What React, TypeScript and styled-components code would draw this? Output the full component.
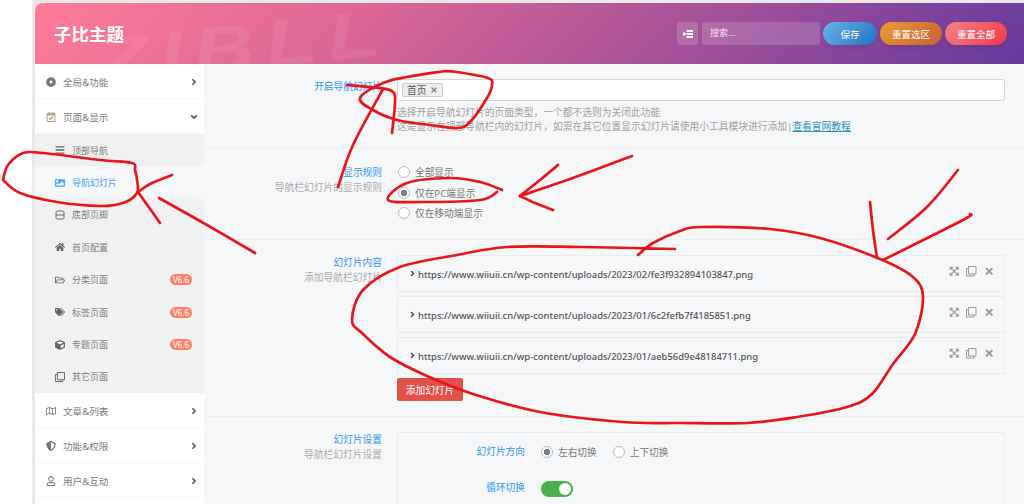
import React from 'react';
import styled, { createGlobalStyle } from 'styled-components';
import {
  FaAngleRight, FaAngleDown, FaDotCircle, FaRegCalendarCheck, FaBars, FaImage, FaHome,
  FaRegFolderOpen, FaTags, FaCube, FaRegClone, FaRegMap, FaShieldAlt, FaRegUser,
  FaExpandArrowsAlt, FaTimes,
} from 'react-icons/fa';

const GlobalStyle = createGlobalStyle`
  html, body {
    margin: 0;
    height: 504px;
    overflow: hidden;
    background: #fff;
    font-family: "Noto Sans", "Noto Sans CJK SC", sans-serif;
  }
`;

const Page = styled.div`
  position: relative;
  height: 504px;
  overflow: hidden;
`;

const Frame = styled.div`
  height: 504px;
  margin-left: 32px;
  padding: 3px 0 0 3px;
  box-sizing: border-box;
  background: #e9e9e9;
`;

const Panel = styled.div`
  height: 100%;
  display: flex;
  flex-direction: column;
  border-top-left-radius: 8px;
  overflow: hidden;
`;

const Header = styled.header`
  position: relative;
  flex: 0 0 61px;
  display: flex;
  align-items: center;
  padding: 0 17px 0 19px;
  background: linear-gradient(135deg, #ff7b97 0%, #d86596 35%, #a04f99 68%, #663a9f 100%);
  overflow: hidden;
`;

const Watermark = styled.div`
  position: absolute;
  left: 65px;
  top: 26px;
  font: italic 700 66px/1 "Liberation Sans", sans-serif;
  letter-spacing: 8px;
  color: rgba(255, 255, 255, 0.07);
  transform: rotate(-6deg) scaleX(1.3);
  transform-origin: left bottom;
`;

const Brand = styled.h1`
  position: relative;
  margin: 0;
  flex: 1;
  font-size: 17.5px;
  font-weight: 700;
  color: #fff;
`;

const HeaderTools = styled.div`
  position: relative;
  display: flex;
  align-items: center;
  gap: 3px;
`;

const ListToggle = styled.div`
  width: 21px;
  height: 23px;
  margin-right: 1px;
  display: flex;
  align-items: center;
  justify-content: center;
  border-radius: 3px;
  background: rgba(255, 255, 255, 0.16);
  color: #fff;
`;

const SearchBox = styled.div`
  width: 118px;
  height: 23px;
  box-sizing: border-box;
  padding-left: 8px;
  border-radius: 3px;
  background: rgba(255, 255, 255, 0.16);
  color: rgba(255, 255, 255, 0.85);
  font-size: 9px;
  line-height: 21px;
`;

const Pill = styled.button<{ $from: string; $to: string; $w: number }>`
  width: ${p => p.$w}px;
  height: 23px;
  padding: 0;
  border: none;
  border-radius: 12px;
  background: linear-gradient(135deg, ${p => p.$from}, ${p => p.$to});
  box-shadow: 0 2px 5px rgba(0, 0, 0, 0.12);
  color: #fff;
  font: inherit;
  font-size: 9.5px;
`;

const Body = styled.div`
  flex: 1;
  display: flex;
  min-height: 0;
`;

const Sidebar = styled.nav`
  flex: 0 0 169px;
  background: #fff;
`;

const NavItem = styled.div`
  height: 35px;
  box-sizing: border-box;
  display: flex;
  align-items: center;
  padding: 1px 5px 0 11px;
  border-bottom: 1px solid #f7f7f7;
  color: #7c7c7c;
  font-size: 9.6px;
`;

const NavIcon = styled.span<{ $tint?: string }>`
  flex: 0 0 17px;
  display: flex;
  align-items: center;
  color: ${p => p.$tint || '#777'};
  font-size: 10px;
`;

const NavText = styled.span`
  flex: 1;
`;

const Caret = styled.span`
  display: flex;
  color: #555;
  font-size: 10px;
`;

const SubList = styled.div`
  background: #f1f1f1;
`;

const SubItem = styled.div<{ $active?: boolean }>`
  height: 32.4px;
  display: flex;
  align-items: center;
  padding: 0 12px 0 20px;
  background: ${p => (p.$active ? '#f6f7f9' : 'transparent')};
  color: ${p => (p.$active ? '#45a5ff' : '#7c7c7c')};
  font-size: 9px;
`;

const SubIcon = styled.span<{ $active?: boolean }>`
  flex: 0 0 17px;
  display: flex;
  align-items: center;
  color: ${p => (p.$active ? '#45a5ff' : '#666')};
  font-size: 10px;
`;

const Badge = styled.span`
  padding: 0 3px;
  height: 11px;
  line-height: 11px;
  border-radius: 6px;
  background: #ff8266;
  color: #fff;
  font-size: 8px;
`;

const Content = styled.main`
  flex: 1;
  background: #f6f7f9;
  min-width: 0;
`;

const Row = styled.section<{ $h: number; $pad: number }>`
  height: ${p => p.$h}px;
  box-sizing: border-box;
  display: grid;
  grid-template-columns: 178px 608px;
  column-gap: 15px;
  padding-top: ${p => p.$pad}px;
  border-bottom: 1px solid #eeeff1;
`;

const LabelCol = styled.div`
  padding-top: 1px;
  text-align: right;
`;

const Label = styled.div`
  color: #2f96f5;
  font-size: 9.7px;
  line-height: 14px;
`;

const SubLabel = styled.div`
  margin-top: 1px;
  color: #aaa;
  font-size: 9.75px;
  line-height: 14px;
`;

const SelectBox = styled.div`
  height: 22px;
  box-sizing: border-box;
  display: flex;
  align-items: center;
  padding-left: 4px;
  border: 1px solid #d5d5d5;
  border-radius: 3px;
  background: #fff;
`;

const Tag = styled.span`
  height: 14px;
  box-sizing: border-box;
  display: flex;
  align-items: center;
  gap: 4px;
  padding: 0 4px;
  border: 1px solid #ccc;
  border-radius: 2px;
  background: #eee;
  color: #555;
  font-size: 9.7px;
`;

const TagClose = styled.span`
  display: flex;
  color: #8c8c8c;
  font-size: 8px;
`;

const Help = styled.p`
  margin: 5px 0 0;
  color: #a0a0a0;
  font-size: 9.75px;
  line-height: 14px;
`;

const HelpLink = styled.a`
  color: #2f8fc4;
  text-decoration: underline;
`;

const RadioGroup = styled.div`
  display: flex;
  flex-direction: column;
  gap: 6.5px;
  padding: 0 0 0 1px;
`;

const RadioRow = styled.div`
  display: flex;
  gap: 16px;
`;

const RadioOption = styled.label`
  height: 14px;
  display: flex;
  align-items: center;
  gap: 5px;
  color: #777;
  font-size: 9.7px;
`;

const RadioMark = styled.span<{ $on?: boolean }>`
  width: 12px;
  height: 12px;
  box-sizing: border-box;
  border: 1px solid #bbb;
  border-radius: 50%;
  background: ${p => (p.$on ? 'radial-gradient(circle, #76838f 0 3px, #fff 3.6px)' : '#fff')};
`;

const Slides = styled.div`
  display: flex;
  flex-direction: column;
  gap: 4px;
`;

const Slide = styled.div`
  height: 37px;
  box-sizing: border-box;
  display: flex;
  align-items: center;
  padding: 0 10px 0 10px;
  border: 1px solid #e9ebee;
`;

const SlideCaret = styled.span`
  flex: 0 0 10px;
  display: flex;
  color: #444;
  font-size: 9px;
`;

const SlideUrl = styled.span`
  flex: 1;
  padding-top: 1px;
  color: #555;
  font-size: 9.43px;
  font-weight: 500;
`;

const SlideActions = styled.span`
  display: flex;
  align-items: center;
  gap: 7px;
  margin-top: -4px;
  color: #999;
  font-size: 10.5px;
`;

const AddButton = styled.button`
  display: block;
  width: 66px;
  height: 23px;
  margin-top: 4px;
  padding: 0;
  border: none;
  border-radius: 2px;
  background: #e2504a;
  color: #fff;
  font: inherit;
  font-size: 9.7px;
`;

const SettingsBox = styled.div`
  height: 90px;
  box-sizing: border-box;
  padding-top: 12px;
  border: 1px solid #e9ebee;
`;

const SettingRow = styled.div`
  height: 36px;
  display: grid;
  grid-template-columns: 127px 1fr;
  column-gap: 16px;
`;

const SettingLabel = styled.div`
  text-align: right;
  color: #2f96f5;
  font-size: 9.7px;
  line-height: 14px;
`;

const Toggle = styled.span`
  position: relative;
  display: block;
  width: 32px;
  height: 16px;
  border-radius: 8px;
  background: #4caf50;

  &::after {
    content: '';
    position: absolute;
    top: 2px;
    right: 2px;
    width: 12px;
    height: 12px;
    border-radius: 50%;
    background: #fff;
  }
`;

const Scribbles = styled.svg`
  position: absolute;
  left: 0;
  top: 0;
  width: 1024px;
  height: 504px;
  pointer-events: none;
`;

const FooterIcon = () => (
  <svg width="10" height="10" viewBox="0 0 10 10" fill="none" stroke="currentColor" strokeWidth="1">
    <rect x="1" y="1" width="8" height="8" rx="1.5" />
    <path d="M1 5h8" />
  </svg>
);

const ListIcon = () => (
  <svg width="10" height="8" viewBox="0 0 10 8" fill="currentColor">
    <rect x="0" y="2.5" width="2.5" height="3" />
    <rect x="3.5" y="0" width="6.5" height="2" />
    <rect x="3.5" y="3" width="6.5" height="2" />
    <rect x="3.5" y="6" width="6.5" height="2" />
  </svg>
);

type Pt = [number, number];

// catmull-rom through the traced points, so the stroke passes through each of them
const smooth = (pts: Pt[]) => {
  let d = `M${pts[0][0]} ${pts[0][1]}`;
  for (let i = 0; i < pts.length - 1; i++) {
    const p0 = pts[i - 1] || pts[i];
    const p1 = pts[i];
    const p2 = pts[i + 1];
    const p3 = pts[i + 2] || p2;
    const c1x = p1[0] + (p2[0] - p0[0]) / 6;
    const c1y = p1[1] + (p2[1] - p0[1]) / 6;
    const c2x = p2[0] - (p3[0] - p1[0]) / 6;
    const c2y = p2[1] - (p3[1] - p1[1]) / 6;
    d += ` C${c1x} ${c1y} ${c2x} ${c2y} ${p2[0]} ${p2[1]}`;
  }
  return d;
};

const strokes: Pt[][] = [
  [[445, 71], [457, 72], [488, 78], [492, 85], [487, 98], [470, 122], [457, 128], [430, 125], [397, 120], [373, 110], [360, 98], [383, 83], [407, 77], [445, 71]],
  [[338, 187], [353, 145], [383, 89]],
  [[347, 85], [380, 88], [393, 92], [395, 103], [392, 133]],
  [[3, 180], [8, 165], [23, 153], [43, 153], [100, 160], [132, 163], [135, 170], [137, 180], [137, 193], [123, 203], [100, 206], [57, 202], [20, 193], [3, 180]],
  [[172, 175], [150, 184], [138, 192]],
  [[138, 192], [148, 206], [160, 223]],
  [[159, 198], [207, 225], [255, 253]],
  [[502, 190], [480, 182], [450, 178], [407, 183], [388, 200], [423, 202], [480, 200], [497, 192]],
  [[632, 156], [573, 178], [520, 196]],
  [[520, 196], [535, 203], [553, 210]],
  [[558, 165], [540, 180], [520, 196]],
  [[675, 249], [580, 247], [507, 247], [457, 255], [400, 267], [363, 290], [352, 320], [363, 334], [390, 357], [427, 376], [473, 394], [540, 412], [623, 422], [680, 423], [747, 423], [797, 417], [847, 407], [872, 394], [893, 364], [915, 334], [923, 297], [913, 277], [880, 259], [820, 238], [770, 229], [700, 227], [680, 231], [653, 243], [638, 255]],
  [[870, 202], [873, 230], [877, 258]],
  [[970, 214], [963, 220], [883, 260]],
  [[888, 239], [927, 207], [958, 170]],
];

const subItems = [
  { icon: <FaBars />, label: '顶部导航' },
  { icon: <FaImage />, label: '导航幻灯片', active: true },
  { icon: <FooterIcon />, label: '底部页脚' },
  { icon: <FaHome />, label: '首页配置' },
  { icon: <FaRegFolderOpen />, label: '分类页面', badge: true },
  { icon: <FaTags />, label: '标签页面', badge: true },
  { icon: <FaCube />, label: '专题页面', badge: true },
  { icon: <FaRegClone />, label: '其它页面' },
];

const slideUrls = [
  'https://www.wiiuii.cn/wp-content/uploads/2023/02/fe3f932894103847.png',
  'https://www.wiiuii.cn/wp-content/uploads/2023/01/6c2fefb7f4185851.png',
  'https://www.wiiuii.cn/wp-content/uploads/2023/01/aeb56d9e48184711.png',
];

export default function App() {
  return (
    <Page>
      <GlobalStyle />
      <Frame>
        <Panel>
          <Header>
            <Watermark>ZIBLL</Watermark>
            <Brand>子比主题</Brand>
            <HeaderTools>
              <ListToggle><ListIcon /></ListToggle>
              <SearchBox>搜索...</SearchBox>
              <Pill $w={54} $from="#6cb6ee" $to="#1f6fbd">保存</Pill>
              <Pill $w={62} $from="#ef9a32" $to="#c2603a">重置选区</Pill>
              <Pill $w={62} $from="#f5818c" $to="#ee3b47">重置全部</Pill>
            </HeaderTools>
          </Header>
          <Body>
            <Sidebar>
              <NavItem>
                <NavIcon><FaDotCircle /></NavIcon>
                <NavText>全局&amp;功能</NavText>
                <Caret><FaAngleRight /></Caret>
              </NavItem>
              <NavItem>
                <NavIcon $tint="#a8987f"><FaRegCalendarCheck /></NavIcon>
                <NavText>页面&amp;显示</NavText>
                <Caret><FaAngleDown /></Caret>
              </NavItem>
              <SubList>
                {subItems.map(item => (
                  <SubItem key={item.label} $active={item.active}>
                    <SubIcon $active={item.active}>{item.icon}</SubIcon>
                    <NavText>{item.label}</NavText>
                    {item.badge && <Badge>V6.6</Badge>}
                  </SubItem>
                ))}
              </SubList>
              <NavItem>
                <NavIcon><FaRegMap /></NavIcon>
                <NavText>文章&amp;列表</NavText>
                <Caret><FaAngleRight /></Caret>
              </NavItem>
              <NavItem>
                <NavIcon><FaShieldAlt /></NavIcon>
                <NavText>功能&amp;权限</NavText>
                <Caret><FaAngleRight /></Caret>
              </NavItem>
              <NavItem>
                <NavIcon><FaRegUser /></NavIcon>
                <NavText>用户&amp;互动</NavText>
                <Caret><FaAngleRight /></Caret>
              </NavItem>
            </Sidebar>
            <Content>
              <Row $h={84} $pad={15}>
                <LabelCol><Label>开启导航幻灯片</Label></LabelCol>
                <div>
                  <SelectBox>
                    <Tag>首页<TagClose><FaTimes /></TagClose></Tag>
                  </SelectBox>
                  <Help>
                    选择开启导航幻灯片的页面类型，一个都不选则为关闭此功能
                    <br />
                    这是显示在顶部导航栏内的幻灯片，如需在其它位置显示幻灯片请使用小工具模块进行添加|
                    <HelpLink>查看官网教程</HelpLink>
                  </Help>
                </div>
              </Row>
              <Row $h={92} $pad={17}>
                <LabelCol>
                  <Label>显示规则</Label>
                  <SubLabel>导航栏幻灯片的显示规则</SubLabel>
                </LabelCol>
                <RadioGroup>
                  <RadioOption><RadioMark />全部显示</RadioOption>
                  <RadioOption><RadioMark $on />仅在PC端显示</RadioOption>
                  <RadioOption><RadioMark />仅在移动端显示</RadioOption>
                </RadioGroup>
              </Row>
              <Row $h={177} $pad={15}>
                <LabelCol>
                  <Label>幻灯片内容</Label>
                  <SubLabel>添加导航栏幻灯片</SubLabel>
                </LabelCol>
                <div>
                  <Slides>
                    {slideUrls.map(url => (
                      <Slide key={url}>
                        <SlideCaret><FaAngleRight /></SlideCaret>
                        <SlideUrl>{url}</SlideUrl>
                        <SlideActions><FaExpandArrowsAlt /><FaRegClone /><FaTimes /></SlideActions>
                      </Slide>
                    ))}
                  </Slides>
                  <AddButton>添加幻灯片</AddButton>
                </div>
              </Row>
              <Row $h={90} $pad={15}>
                <LabelCol>
                  <Label>幻灯片设置</Label>
                  <SubLabel>导航栏幻灯片设置</SubLabel>
                </LabelCol>
                <SettingsBox>
                  <SettingRow>
                    <SettingLabel>幻灯片方向</SettingLabel>
                    <RadioRow>
                      <RadioOption><RadioMark $on />左右切换</RadioOption>
                      <RadioOption><RadioMark />上下切换</RadioOption>
                    </RadioRow>
                  </SettingRow>
                  <SettingRow>
                    <SettingLabel>循环切换</SettingLabel>
                    <div><Toggle /></div>
                  </SettingRow>
                </SettingsBox>
              </Row>
            </Content>
          </Body>
        </Panel>
      </Frame>
      <Scribbles viewBox="0 0 1024 504" fill="none" stroke="#e8161b" strokeWidth="2.7" strokeLinecap="round" strokeLinejoin="round">
        {strokes.map((pts, i) => <path key={i} d={smooth(pts)} />)}
      </Scribbles>
    </Page>
  );
}
